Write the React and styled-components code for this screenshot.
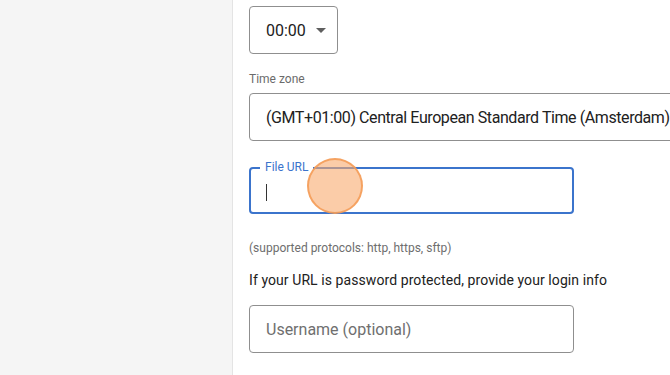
import React from 'react';
import styled, { createGlobalStyle } from 'styled-components';

const GlobalStyle = createGlobalStyle`
  html, body {
    margin: 0;
    padding: 0;
    background: #ffffff;
    font-family: Roboto, 'Liberation Sans', sans-serif;
    overflow: hidden;
  }
`;

const Page = styled.div`
  display: flex;
  width: 670px;
  height: 375px;
  overflow: hidden;
`;

const Sidebar = styled.aside`
  flex: 0 0 232px;
  background: #f5f5f5;
  border-right: 1px solid #e4e4e4;
`;

const Content = styled.main`
  flex: 1;
  min-width: 0;
  padding: 6px 0 0 16px;
  display: flex;
  flex-direction: column;
  align-items: flex-start;
`;

const Box = styled.div`
  box-sizing: border-box;
  height: 48px;
  width: ${(p) => p.$width}px;
  flex-shrink: 0;
  border: 1px solid #8f8f8f;
  border-radius: 4px;
  display: flex;
  align-items: center;
  padding-left: 16px;
  font-size: 16px;
  letter-spacing: ${(p) => (p.$tight ? '-0.42px' : 'normal')};
  color: #212121;
  white-space: nowrap;
  margin-top: ${(p) => p.$top || 0}px;
`;

const Caret = styled.span`
  width: 0;
  height: 0;
  margin-left: 10px;
  border-left: 5px solid transparent;
  border-right: 5px solid transparent;
  border-top: 5px solid #5f5f5f;
`;

const Label = styled.div`
  margin-top: 17px;
  font-size: 12px;
  line-height: 16px;
  color: #6b6b6b;
  margin-bottom: 6px;
`;

const FieldWrap = styled.div`
  position: relative;
  margin-top: 26px;
`;

const FocusedBox = styled.div`
  box-sizing: border-box;
  width: 325px;
  height: 47px;
  border: 2px solid #3b74cc;
  border-radius: 4px;
  display: flex;
  align-items: center;
  padding-left: 15px;
`;

const FloatLabel = styled.span`
  position: absolute;
  left: 11px;
  top: -8px;
  padding: 0 5px;
  background: #ffffff;
  font-size: 12px;
  line-height: 16px;
  color: #3b74cc;
`;

const Cursor = styled.span`
  width: 1px;
  height: 17px;
  margin-top: 3px;
  background: #333333;
`;

const Touch = styled.span`
  position: absolute;
  left: 58px;
  top: -9px;
  width: 56px;
  height: 56px;
  box-sizing: border-box;
  border-radius: 50%;
  background: rgba(248, 170, 110, 0.6);
  border: 2px solid rgba(244, 155, 85, 0.85);
`;

const Helper = styled.div`
  margin-top: 26px;
  font-size: 12px;
  line-height: 16px;
  color: #6e6e6e;
`;

const Info = styled.div`
  margin-top: 14px;
  font-size: 14px;
  line-height: 20px;
  letter-spacing: 0.08px;
  color: #212121;
`;

const Placeholder = styled.span`
  color: #6f6f6f;
`;

export default function App() {
  return (
    <>
      <GlobalStyle />
      <Page>
        <Sidebar />
        <Content>
          <Box $width={89}>
            00:00
            <Caret />
          </Box>
          <Label>Time zone</Label>
          <Box $width={470} $tight>(GMT+01:00) Central European Standard Time (Amsterdam)</Box>
          <FieldWrap>
            <FocusedBox>
              <Cursor />
            </FocusedBox>
            <FloatLabel>File URL</FloatLabel>
            <Touch />
          </FieldWrap>
          <Helper>(supported protocols: http, https, sftp)</Helper>
          <Info>If your URL is password protected, provide your login info</Info>
          <Box $width={325} $top={15}>
            <Placeholder>Username (optional)</Placeholder>
          </Box>
        </Content>
      </Page>
    </>
  );
}
